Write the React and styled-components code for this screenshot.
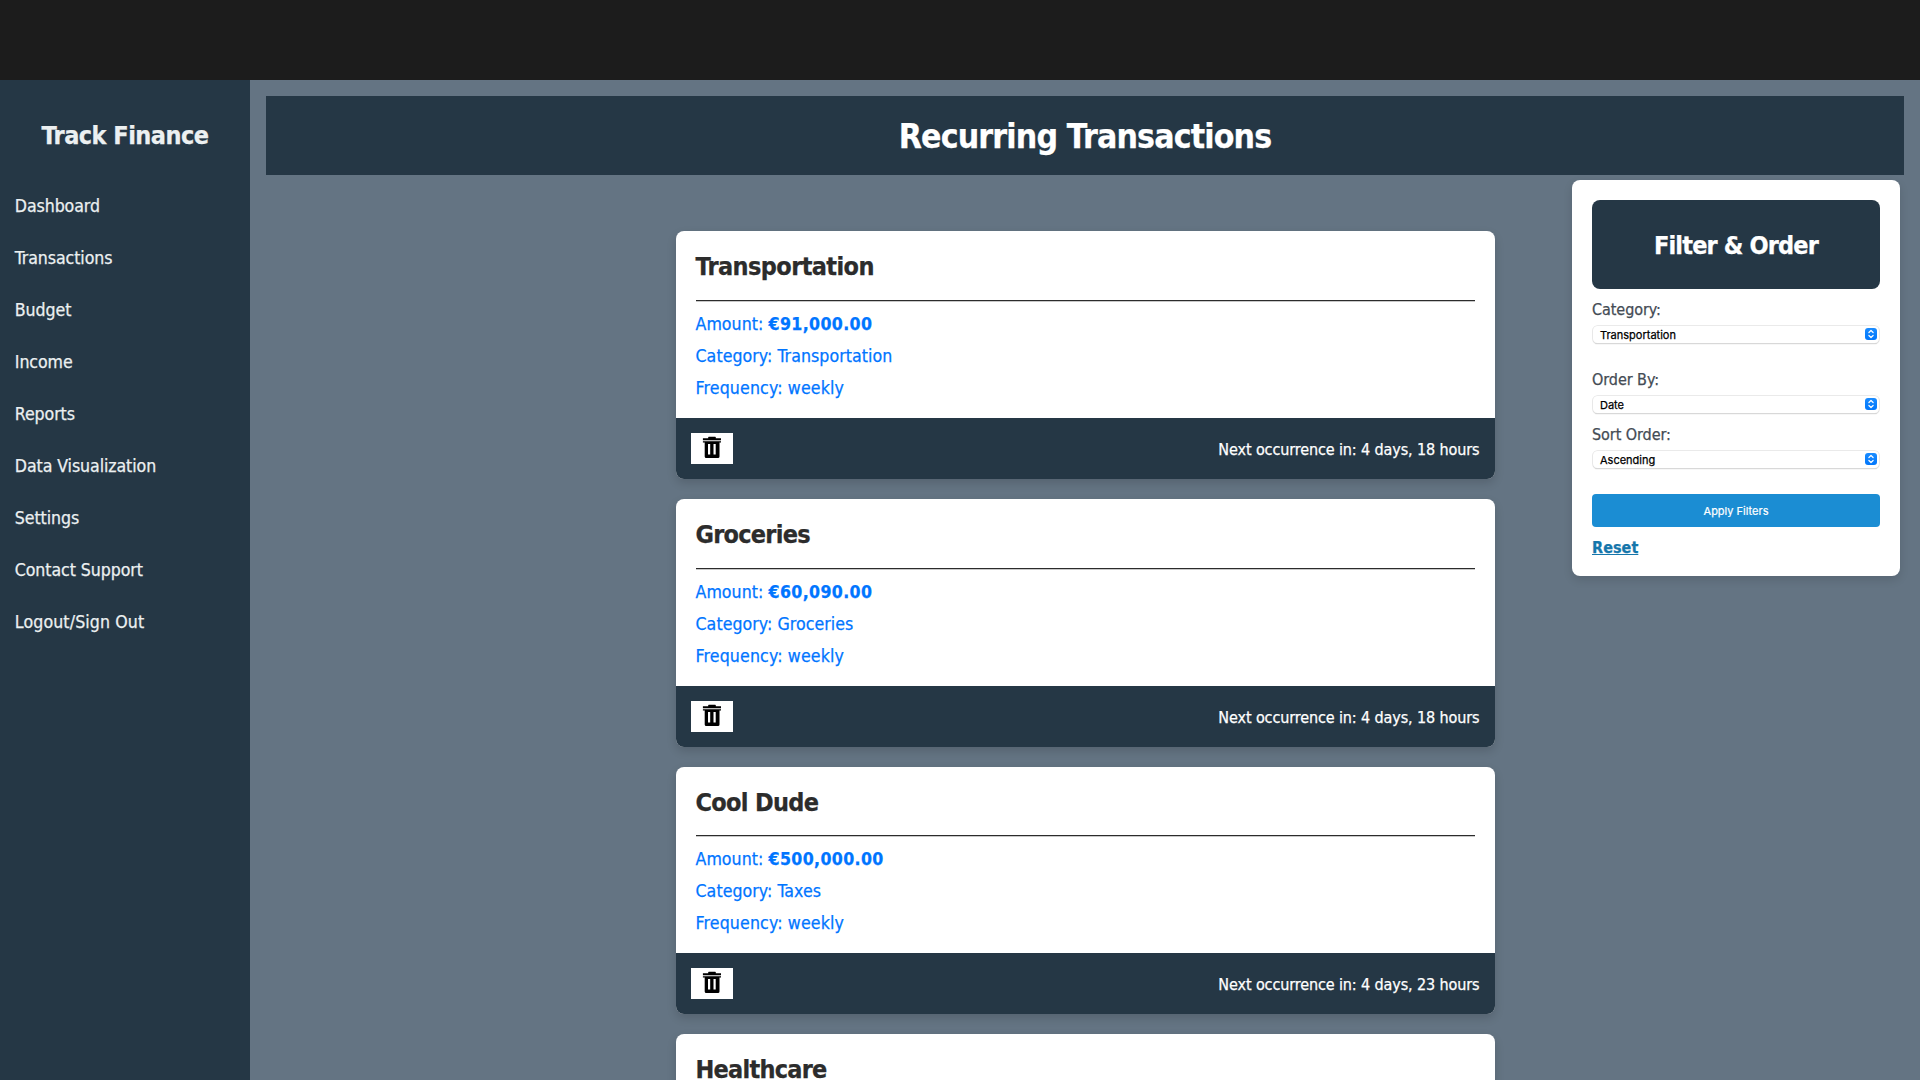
import React from "react";
import styled, { createGlobalStyle } from "styled-components";

const navy = "#253745";

const GlobalStyle = createGlobalStyle`
  *, *::before, *::after { box-sizing: border-box; }
  body {
    margin: 0;
    overflow: hidden;
    background: #647483;
    font-family: "DejaVu Sans Condensed", "DejaVu Sans", Tahoma, sans-serif;
    -webkit-text-stroke: 0.25px currentColor;
  }
  h1, h2, p { margin: 0; }
`;

const Page = styled.div`
  display: flex;
  flex-direction: column;
  height: 100vh;
  overflow: hidden;
`;

const TopBar = styled.div`
  flex: none;
  height: 80px;
  background: #1c1c1c;
`;

const Shell = styled.div`
  flex: 1;
  min-height: 0;
  display: flex;
`;

const Sidebar = styled.aside`
  flex: none;
  width: 250px;
  padding-top: 26px;
  background: ${navy};
  color: #ecf0f1;
`;

const Brand = styled.h2`
  margin-bottom: 14px;
  font-size: 25px;
  line-height: 60px;
  letter-spacing: -0.53px;
  text-align: center;
`;

const Nav = styled.nav`
  display: flex;
  flex-direction: column;
`;

const NavLink = styled.a`
  padding-left: 14.8px;
  font-size: 17.6px;
  line-height: 52px;
  letter-spacing: ${(p) => p.$tracking || "-0.08px"};
`;

const Main = styled.main`
  flex: 1;
  min-width: 0;
  padding: 16px 16px 0;
  overflow: hidden;
`;

const PageHeader = styled.header`
  height: 79px;
  padding-top: 2px;
  background: ${navy};
  color: #fff;
  text-align: center;
`;

const PageTitle = styled.h1`
  font-size: 33.5px;
  line-height: 78px;
  letter-spacing: -0.84px;
`;

const Content = styled.div`
  display: grid;
  grid-template-columns: 1fr 819px 1fr;
  align-items: start;
`;

const CardList = styled.section`
  grid-column: 2;
  display: flex;
  flex-direction: column;
  gap: 20px;
  padding-top: 56.1px;
`;

const Card = styled.article`
  min-height: 247.75px;
  border-radius: 8px;
  overflow: hidden;
  background: #fff;
  box-shadow: 0 4px 10px rgba(0, 0, 0, 0.15);
`;

const CardBody = styled.div`
  padding: 2px 20px 14px;
`;

const CardTitle = styled.h2`
  height: 67.75px;
  margin-bottom: 7px;
  border-bottom: 1px solid #2c2c2c;
  box-shadow: 0 1px 0 #c8c8c8;
  color: #2c2c2c;
  font-size: 25px;
  line-height: 67px;
  letter-spacing: ${(p) => p.$tracking || "-0.6px"};
`;

const Detail = styled.p`
  color: #0075ff;
  font-size: 17.6px;
  line-height: 32px;
  letter-spacing: ${(p) => p.$tracking || "0.06px"};

  strong { letter-spacing: 0.36px; }
`;

const CardFooter = styled.footer`
  display: flex;
  align-items: center;
  justify-content: space-between;
  height: 61px;
  padding: 0 15px;
  background: ${navy};
`;

const DeleteButton = styled.button`
  display: flex;
  align-items: flex-start;
  justify-content: center;
  width: 42px;
  height: 31px;
  padding: 3px 0 0;
  border: 0;
  background: #fff;
`;

const Occurrence = styled.span`
  padding-top: 3px;
  color: #fff;
  font-size: 16px;
  line-height: 24px;
  letter-spacing: -0.11px;
`;

const FilterPanel = styled.aside`
  grid-column: 3;
  justify-self: end;
  width: 328px;
  height: 396px;
  margin: 5px 4px 0 0;
  padding: 20px;
  border-radius: 8px;
  background: #fff;
  box-shadow: 0 4px 10px rgba(0, 0, 0, 0.12);
`;

const FilterTitle = styled.h2`
  height: 89px;
  padding-top: 1px;
  border-radius: 8px;
  background: ${navy};
  color: #fff;
  font-size: 25px;
  line-height: 90px;
  letter-spacing: -0.84px;
  text-align: center;
`;

const Field = styled.label`
  display: block;
  height: 55px;
  margin-top: ${(p) => p.$gap || "0"};
`;

const FieldLabel = styled.span`
  display: block;
  height: 27px;
  padding-top: 1px;
  color: #444c55;
  font-size: 16px;
  line-height: 20px;
  letter-spacing: -0.06px;
`;

const Select = styled.span`
  display: flex;
  align-items: flex-start;
  justify-content: space-between;
  height: 17px;
  margin: 0 1px;
  padding: 0 2px 0 7px;
  border-radius: 4.5px;
  box-shadow: 0 0 0 0.8px #e4e4e4, 0 1px 1px rgba(0, 0, 0, 0.32);
  background: #fff;
  color: #000;
  font-family: Inter, sans-serif;
  font-size: 11px;
  line-height: 19px;
`;

const Stepper = styled.span`
  display: flex;
  align-items: center;
  justify-content: center;
  width: 12px;
  height: 12px;
  margin-top: 2px;
  border-radius: 3px;
  background: linear-gradient(#1a8cff, #0076fb);
`;

const ApplyButton = styled.button`
  display: block;
  width: 100%;
  height: 33px;
  margin-top: 15px;
  padding: 1px 0 0;
  border: 0;
  border-radius: 4px;
  background: #1b8dd3;
  color: #fff;
  font-family: Inter, sans-serif;
  font-size: 11px;
  -webkit-text-stroke: 0.2px currentColor;
`;

const ResetLink = styled.a`
  display: inline-block;
  margin-top: 11px;
  color: #1576ab;
  font-size: 16px;
  font-weight: 700;
  line-height: 20px;
  letter-spacing: 0.05px;
  text-decoration: underline;
  text-decoration-thickness: 1px;
  text-underline-offset: 1px;
`;

const links = [
  "Dashboard", "Transactions", "Budget", "Income", "Reports",
  "Data Visualization", "Settings", "Contact Support", "Logout/Sign Out",
];

const transactions = [
  { name: "Transportation", amount: "€91,000.00", category: "Transportation", next: "4 days, 18 hours" },
  { name: "Groceries", amount: "€60,090.00", category: "Groceries", next: "4 days, 18 hours", tracking: "-0.75px" },
  { name: "Cool Dude", amount: "€500,000.00", category: "Taxes", next: "4 days, 23 hours", tracking: "-0.7px" },
  { name: "Healthcare", tracking: "-0.75px" },
];

function TrashIcon() {
  return (
    <svg width="20" height="23" viewBox="0 0 20 23" aria-hidden="true">
      <path fill="#000" d="M6.2 2.2V1.2Q6.2.7 6.8.7h6.4q.6 0 .6.5v1h5.2v1.700H.9V2.2Z" />
      <path fill="#bbb" d="M.9 3.900h18.1v1.300H.9z" />
      <path
        fill="#000"
        fillRule="evenodd"
        d="M.9 5.200h18.1v1.200h-1.500v14.200q0 1.500-1.500 1.500H4.200q-1.500 0-1.500-1.500V6.400H.9ZM6 8v10.600h2.200V8ZM11.500 8v10.600h2.200V8Z"
      />
    </svg>
  );
}

function SelectField({ label, value, gap }) {
  return (
    <Field $gap={gap}>
      <FieldLabel>{label}</FieldLabel>
      <Select>
        {value}
        <Stepper>
          <svg width="8" height="10" viewBox="0 0 8 10" fill="none" stroke="#fff" strokeWidth="1.2" strokeLinecap="round" strokeLinejoin="round">
            <path d="M1.900 3.500 4 1.500l2.100 2M1.900 6.500 4 8.500l2.100-2" />
          </svg>
        </Stepper>
      </Select>
    </Field>
  );
}

function TransactionCard({ item }) {
  return (
    <Card>
      <CardBody>
        <CardTitle $tracking={item.tracking}>{item.name}</CardTitle>
        {item.amount && (
          <>
            <Detail>Amount: <strong>{item.amount}</strong></Detail>
            <Detail>Category: {item.category}</Detail>
            <Detail $tracking="0.15px">Frequency: weekly</Detail>
          </>
        )}
      </CardBody>
      {item.next && (
        <CardFooter>
          <DeleteButton aria-label="Delete"><TrashIcon /></DeleteButton>
          <Occurrence>Next occurrence in: {item.next}</Occurrence>
        </CardFooter>
      )}
    </Card>
  );
}

export default function App() {
  return (
    <Page>
      <GlobalStyle />
      <TopBar />
      <Shell>
        <Sidebar>
          <Brand>Track Finance</Brand>
          <Nav>
            {links.map((l) => (
              <NavLink key={l} $tracking={l.startsWith("Logout") ? "0.12px" : undefined}>{l}</NavLink>
            ))}
          </Nav>
        </Sidebar>
        <Main>
          <PageHeader>
            <PageTitle>Recurring Transactions</PageTitle>
          </PageHeader>
          <Content>
            <CardList>
              {transactions.map((t) => <TransactionCard key={t.name} item={t} />)}
            </CardList>
            <FilterPanel>
              <FilterTitle>Filter &amp; Order</FilterTitle>
              <SelectField label="Category:" value="Transportation" gap="10px" />
              <SelectField label="Order By:" value="Date" gap="15px" />
              <SelectField label="Sort Order:" value="Ascending" />
              <ApplyButton>Apply Filters</ApplyButton>
              <ResetLink>Reset</ResetLink>
            </FilterPanel>
          </Content>
        </Main>
      </Shell>
    </Page>
  );
}
